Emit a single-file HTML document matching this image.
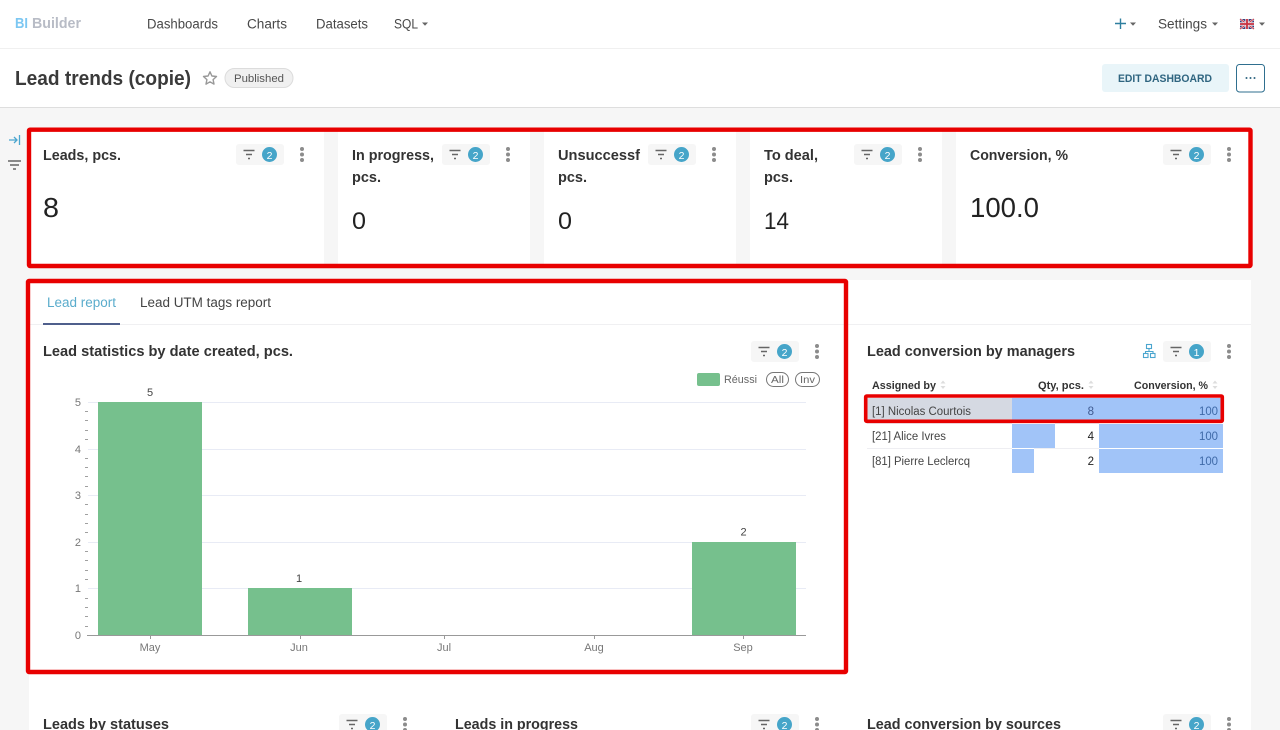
<!DOCTYPE html>
<html lang="en">
<head>
<meta charset="utf-8">
<title>Lead trends (copie)</title>
<style>
html,body{margin:0;padding:0;width:1280px;height:730px;overflow:hidden;background:#f6f6f6}
svg{display:block;position:absolute;left:0;top:0;filter:blur(.25px)}
text{font-family:"Liberation Sans",sans-serif;fill:#333;white-space:pre}
.b{font-weight:bold}
.nav{font-size:13.5px;fill:#484848}
.ct{font-size:14.5px;font-weight:bold;fill:#333}
.ax{font-size:11px;fill:#777}
.th{font-size:11px;font-weight:bold;fill:#333}
.td{font-size:11.5px;fill:#444}
.bd{font-size:10.5px;fill:#fff;text-anchor:middle}
</style>
</head>
<body>
<svg width="1280" height="730" viewBox="0 0 1280 730" xmlns="http://www.w3.org/2000/svg">
<defs>
<g id="chip">
  <rect x="0" y="0" width="48" height="21" rx="3" fill="#f6f6f6"/>
  <path d="M7.500 6.500h11M10 10.500h6M12 14.500h2" stroke="#666" stroke-width="1.400" fill="none"/>
  <circle cx="33.500" cy="10.500" r="7.500" fill="#46a5c9"/>
</g>
<g id="dots">
  <circle cx="0" cy="-5.500" r="2" fill="#8c8c8c"/><circle cx="0" cy="0" r="2" fill="#8c8c8c"/><circle cx="0" cy="5.500" r="2" fill="#8c8c8c"/>
</g>
</defs>

<!-- page background -->
<rect width="1280" height="730" fill="#f6f6f6"/>
<!-- top nav -->
<rect width="1280" height="48" fill="#fff"/>
<rect y="48" width="1280" height="1" fill="#f0f0f0"/>
<text x="15" y="28" class="b" font-size="14.500" style="fill:#7cc7f2" textLength="13" lengthAdjust="spacingAndGlyphs">BI</text>
<text x="32" y="28" class="b" font-size="14.500" style="fill:#b8bcc6" textLength="49" lengthAdjust="spacingAndGlyphs">Builder</text>
<text x="147" y="28.500" class="nav" textLength="71" lengthAdjust="spacingAndGlyphs">Dashboards</text>
<text x="247" y="28.500" class="nav" textLength="40" lengthAdjust="spacingAndGlyphs">Charts</text>
<text x="316" y="28.500" class="nav" textLength="52" lengthAdjust="spacingAndGlyphs">Datasets</text>
<text x="394" y="28.500" class="nav" textLength="24" lengthAdjust="spacingAndGlyphs">SQL</text>
<path d="M422 22.500h6l-3 3.200z" fill="#666"/>
<path d="M1120.500 18.500v10.500M1115 23.500h11" stroke="#2f7f9f" stroke-width="1.400"/>
<path d="M1130 22.500h6l-3 3.200z" fill="#666"/>
<text x="1158" y="28.500" class="nav" textLength="49" lengthAdjust="spacingAndGlyphs">Settings</text>
<path d="M1212 22.500h6l-3 3.200z" fill="#666"/>
<!-- flag -->
<g>
  <rect x="1240" y="19" width="14" height="10" rx="1" fill="#39407c"/>
  <path d="M1240 19l14 10M1254 19l-14 10" stroke="#e6dfe6" stroke-width="2"/>
  <path d="M1240 19l14 10M1254 19l-14 10" stroke="#c8303f" stroke-width=".8"/>
  <path d="M1247 19v10M1240 24h14" stroke="#e6dfe6" stroke-width="3.400"/>
  <path d="M1247 19v10M1240 24h14" stroke="#c8303f" stroke-width="1.800"/>
</g>
<path d="M1259 22.500h6l-3 3.200z" fill="#666"/>

<!-- title bar -->
<rect y="49" width="1280" height="58" fill="#fff"/>
<rect y="107" width="1280" height="1" fill="#dedede"/>
<text x="15" y="85" class="b" font-size="20" style="fill:#3a3a3a" textLength="176" lengthAdjust="spacingAndGlyphs">Lead trends (copie)</text>
<path d="M210 71.800l1.900 4.200 4.600.5-3.400 3.100.9 4.500-4-2.300-4 2.300.9-4.500-3.400-3.100 4.600-.5z" fill="none" stroke="#999" stroke-width="1.400" stroke-linejoin="round"/>
<rect x="225" y="68.500" width="68" height="19" rx="9.500" fill="#f0f0f0" stroke="#dcdcdc"/>
<text x="234" y="82" font-size="11" style="fill:#555" textLength="50" lengthAdjust="spacingAndGlyphs">Published</text>
<rect x="1102" y="64" width="127" height="28" rx="3" fill="#e9f5f9"/>
<text x="1118" y="82" class="b" font-size="11" style="fill:#2f6580" textLength="94" lengthAdjust="spacingAndGlyphs">EDIT DASHBOARD</text>
<rect x="1236.500" y="64.500" width="28" height="27.500" rx="3" fill="#fff" stroke="#2f6f8f"/>
<circle cx="1246.500" cy="78" r="1" fill="#2f6580"/><circle cx="1250.500" cy="78" r="1" fill="#2f6580"/><circle cx="1254.500" cy="78" r="1" fill="#2f6580"/>

<!-- sidebar icons -->
<path d="M9 140h8M14 137l3 3-3 3" stroke="#4ba6cf" stroke-width="1.300" fill="none"/>
<path d="M19.500 135v10" stroke="#4ba6cf" stroke-width="1.300"/>
<path d="M8 161h13M10 165h9M13 169h3" stroke="#666" stroke-width="1.500"/>

<!-- KPI cards -->
<rect x="29" y="130" width="295" height="136" fill="#fff"/>
<rect x="338" y="130" width="192" height="136" fill="#fff"/>
<rect x="544" y="130" width="192" height="136" fill="#fff"/>
<rect x="750" y="130" width="192" height="136" fill="#fff"/>
<rect x="956" y="130" width="295" height="136" fill="#fff"/>

<text x="43" y="160" class="ct" textLength="78" lengthAdjust="spacingAndGlyphs">Leads, pcs.</text>
<use href="#chip" x="236" y="144"/><text x="269.500" y="158.800" class="bd">2</text><use href="#dots" x="302" y="154.500"/>
<text x="43" y="217" font-size="28" style="fill:#222" textLength="16" lengthAdjust="spacingAndGlyphs">8</text>

<text x="352" y="160" class="ct" textLength="82" lengthAdjust="spacingAndGlyphs">In progress,</text>
<text x="352" y="182" class="ct" textLength="29" lengthAdjust="spacingAndGlyphs">pcs.</text>
<use href="#chip" x="442" y="144"/><text x="475.500" y="158.800" class="bd">2</text><use href="#dots" x="508" y="154.500"/>
<text x="352" y="229" font-size="24" style="fill:#222" textLength="14" lengthAdjust="spacingAndGlyphs">0</text>

<text x="558" y="160" class="ct" textLength="82" lengthAdjust="spacingAndGlyphs">Unsuccessf</text>
<text x="558" y="182" class="ct" textLength="29" lengthAdjust="spacingAndGlyphs">pcs.</text>
<use href="#chip" x="648" y="144"/><text x="681.500" y="158.800" class="bd">2</text><use href="#dots" x="714" y="154.500"/>
<text x="558" y="229" font-size="24" style="fill:#222" textLength="14" lengthAdjust="spacingAndGlyphs">0</text>

<text x="764" y="160" class="ct" textLength="54" lengthAdjust="spacingAndGlyphs">To deal,</text>
<text x="764" y="182" class="ct" textLength="29" lengthAdjust="spacingAndGlyphs">pcs.</text>
<use href="#chip" x="854" y="144"/><text x="887.500" y="158.800" class="bd">2</text><use href="#dots" x="920" y="154.500"/>
<text x="764" y="229" font-size="24" style="fill:#222" textLength="25" lengthAdjust="spacingAndGlyphs">14</text>

<text x="970" y="160" class="ct" textLength="98" lengthAdjust="spacingAndGlyphs">Conversion, %</text>
<use href="#chip" x="1163" y="144"/><text x="1196.500" y="158.800" class="bd">2</text><use href="#dots" x="1229" y="154.500"/>
<text x="970" y="217" font-size="28" style="fill:#222" textLength="69" lengthAdjust="spacingAndGlyphs">100.0</text>

<!-- main panel -->
<rect x="29" y="280" width="1222" height="450" fill="#fff"/>
<rect x="29" y="324" width="1222" height="1" fill="#f0f0f2"/>
<text x="47" y="307" font-size="13.500" style="fill:#5aaccc" textLength="69" lengthAdjust="spacingAndGlyphs">Lead report</text>
<text x="140" y="307" font-size="13.500" style="fill:#444" textLength="131" lengthAdjust="spacingAndGlyphs">Lead UTM tags report</text>
<rect x="43" y="323" width="77" height="2" fill="#4f5f8c"/>

<!-- left chart -->
<text x="43" y="356" class="ct" textLength="250" lengthAdjust="spacingAndGlyphs">Lead statistics by date created, pcs.</text>
<use href="#chip" x="751" y="341"/><text x="784.500" y="355.800" class="bd">2</text><use href="#dots" x="817" y="351.500"/>
<rect x="697" y="373" width="23" height="13" rx="2" fill="#76c08d"/>
<text x="724" y="383" class="ax" style="fill:#666" textLength="33" lengthAdjust="spacingAndGlyphs">Réussi</text>
<rect x="766.500" y="372.500" width="22" height="14" rx="7" fill="#fff" stroke="#777"/>
<text x="771" y="383" font-size="10.500" style="fill:#666" textLength="13" lengthAdjust="spacingAndGlyphs">All</text>
<rect x="795.500" y="372.500" width="24" height="14" rx="7" fill="#fff" stroke="#777"/>
<text x="800" y="383" font-size="10.500" style="fill:#666" textLength="15" lengthAdjust="spacingAndGlyphs">Inv</text>

<path d="M88 402.500h718M88 449.500h718M88 495.500h718M88 542.500h718M88 588.500h718" stroke="#e8ebf5" stroke-width="1" fill="none"/>
<path d="M85 411.500h3M85 420.500h3M85 430.500h3M85 439.500h3M85 458.500h3M85 467.500h3M85 476.500h3M85 486.500h3M85 504.500h3M85 514.500h3M85 523.500h3M85 532.500h3M85 551.500h3M85 560.500h3M85 570.500h3M85 579.500h3M85 598.500h3M85 607.500h3M85 616.500h3M85 626.500h3" stroke="#a0a0a0" stroke-width="1"/>
<rect x="98" y="402" width="104" height="233" fill="#76c08d"/>
<rect x="248" y="588" width="104" height="47" fill="#76c08d"/>
<rect x="692" y="542" width="104" height="93" fill="#76c08d"/>
<path d="M87 635.500h719" stroke="#999" stroke-width="1"/>
<path d="M150.500 635v4M300.500 635v4M444.500 635v4M594.500 635v4M743.500 635v4" stroke="#999"/>
<text x="81" y="406" class="ax" text-anchor="end">5</text>
<text x="81" y="453" class="ax" text-anchor="end">4</text>
<text x="81" y="499" class="ax" text-anchor="end">3</text>
<text x="81" y="546" class="ax" text-anchor="end">2</text>
<text x="81" y="592" class="ax" text-anchor="end">1</text>
<text x="81" y="639" class="ax" text-anchor="end">0</text>
<text x="150" y="651" class="ax" text-anchor="middle">May</text>
<text x="299" y="651" class="ax" text-anchor="middle">Jun</text>
<text x="444" y="651" class="ax" text-anchor="middle">Jul</text>
<text x="594" y="651" class="ax" text-anchor="middle">Aug</text>
<text x="743" y="651" class="ax" text-anchor="middle">Sep</text>
<text x="150" y="396" font-size="11" style="fill:#444" text-anchor="middle">5</text>
<text x="299" y="582" font-size="11" style="fill:#444" text-anchor="middle">1</text>
<text x="743.500" y="535.500" font-size="11" style="fill:#444" text-anchor="middle">2</text>

<!-- right table -->
<text x="867" y="356" class="ct" textLength="208" lengthAdjust="spacingAndGlyphs">Lead conversion by managers</text>
<g fill="none" stroke="#4ba6cf" stroke-width="1.100">
  <rect x="1146.500" y="344.500" width="5" height="4"/>
  <rect x="1143.500" y="353.500" width="4.500" height="4"/>
  <rect x="1150.500" y="353.500" width="4.500" height="4"/>
  <path d="M1149 348.500v3M1145.500 353.500v-2h7.500v2"/>
</g>
<use href="#chip" x="1163" y="341"/><text x="1196.500" y="355.800" class="bd">1</text><use href="#dots" x="1229" y="351.500"/>

<text x="872" y="389" class="th" textLength="64" lengthAdjust="spacingAndGlyphs">Assigned by</text>
<path d="M940.500 383.500l2.500-3 2.500 3zM940.500 386l2.500 3 2.500-3z" fill="#ddd"/>
<text x="1038" y="389" class="th" textLength="46" lengthAdjust="spacingAndGlyphs">Qty, pcs.</text>
<path d="M1088.500 383.500l2.500-3 2.500 3zM1088.500 386l2.500 3 2.500-3z" fill="#ddd"/>
<text x="1134" y="389" class="th" textLength="74" lengthAdjust="spacingAndGlyphs">Conversion, %</text>
<path d="M1212.500 383.500l2.500-3 2.500 3zM1212.500 386l2.500 3 2.500-3z" fill="#ddd"/>

<rect x="867" y="398" width="145" height="25" fill="#d5d9e2"/>
<rect x="1012" y="398" width="211" height="25" fill="#a1c4f8"/>
<rect x="1012" y="424" width="43" height="24" fill="#a1c4f8"/>
<rect x="1099" y="424" width="124" height="24" fill="#a1c4f8"/>
<rect x="1012" y="449" width="22" height="24" fill="#a1c4f8"/>
<rect x="1099" y="449" width="124" height="24" fill="#a1c4f8"/>
<path d="M867 423.500h145M1055 423.500h44M867 448.500h145M1034 448.500h65" stroke="#eeeef2"/>

<text x="872" y="415" class="td" textLength="99" lengthAdjust="spacingAndGlyphs">[1] Nicolas Courtois</text>
<text x="1094" y="415" font-size="11.500" style="fill:#3f5a90" text-anchor="end">8</text>
<text x="1218" y="415" font-size="11.500" style="fill:#3f6aa8" text-anchor="end" textLength="19" lengthAdjust="spacingAndGlyphs">100</text>
<text x="872" y="440" class="td" textLength="74" lengthAdjust="spacingAndGlyphs">[21] Alice Ivres</text>
<text x="1094" y="440" font-size="11.500" style="fill:#222" text-anchor="end">4</text>
<text x="1218" y="440" font-size="11.500" style="fill:#3f6aa8" text-anchor="end" textLength="19" lengthAdjust="spacingAndGlyphs">100</text>
<text x="872" y="465" class="td" textLength="98" lengthAdjust="spacingAndGlyphs">[81] Pierre Leclercq</text>
<text x="1094" y="465" font-size="11.500" style="fill:#222" text-anchor="end">2</text>
<text x="1218" y="465" font-size="11.500" style="fill:#3f6aa8" text-anchor="end" textLength="19" lengthAdjust="spacingAndGlyphs">100</text>

<!-- bottom row -->
<text x="43" y="729" class="ct" textLength="126" lengthAdjust="spacingAndGlyphs">Leads by statuses</text>
<use href="#chip" x="339" y="714"/><text x="372.500" y="728.800" class="bd">2</text><use href="#dots" x="405" y="724.500"/>
<text x="455" y="729" class="ct" textLength="123" lengthAdjust="spacingAndGlyphs">Leads in progress</text>
<use href="#chip" x="751" y="714"/><text x="784.500" y="728.800" class="bd">2</text><use href="#dots" x="817" y="724.500"/>
<text x="867" y="729" class="ct" textLength="194" lengthAdjust="spacingAndGlyphs">Lead conversion by sources</text>
<use href="#chip" x="1163" y="714"/><text x="1196.500" y="728.800" class="bd">2</text><use href="#dots" x="1229" y="724.500"/>

<!-- red highlight boxes -->
<rect x="29" y="129.700" width="1221.500" height="136.300" rx="1" fill="none" stroke="#e80000" stroke-width="4.400"/>
<rect x="28" y="281" width="818" height="391" rx="1" fill="none" stroke="#e80000" stroke-width="4.400"/>
<rect x="865.700" y="396" width="356.600" height="25.300" rx="1" fill="none" stroke="#e80000" stroke-width="3.600"/>
</svg>
</body>
</html>
